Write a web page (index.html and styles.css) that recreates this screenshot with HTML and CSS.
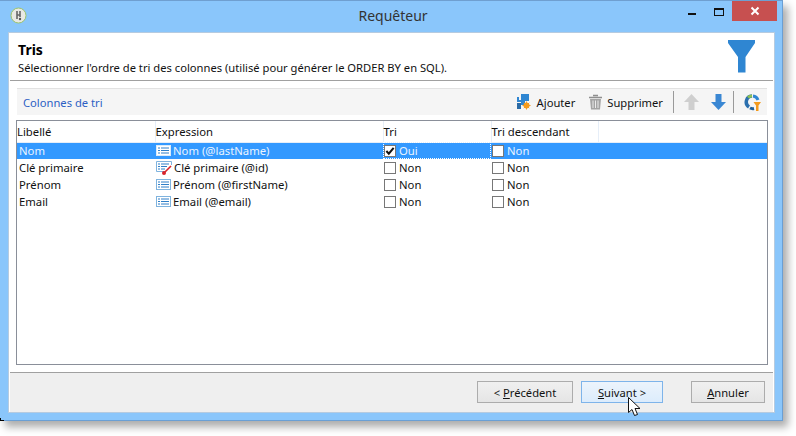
FILE: index.html
```html
<!DOCTYPE html>
<html lang="fr">
<head>
<meta charset="utf-8">
<title>Requêteur</title>
<link rel="stylesheet" href="styles.css">
</head>
<body>
<div class="window">
  <div class="titlebar">
    <svg class="appicon" width="17" height="17" viewBox="0 0 17 17"><circle cx="8.5" cy="8.5" r="7.5" fill="#e9e9e4" stroke="#9cc46a"/><path d="M7 4v8M10 4v6M7 8h3" stroke="#666" stroke-width="1.6" fill="none"/><circle cx="10" cy="12" r="1.2" fill="#555"/></svg>
    <span class="title">Requêteur</span>
    <div class="controls">
      <span class="min"></span>
      <span class="max"></span>
      <span class="close"><svg width="10" height="10" viewBox="0 0 10 10"><path d="M1.5 1.5l7 7M8.5 1.5l-7 7" stroke="#fff" stroke-width="2"/></svg></span>
    </div>
  </div>
  <div class="client">
    <header class="head">
      <div>
        <h1>Tris</h1>
        <p>Sélectionner l'ordre de tri des colonnes (utilisé pour générer le ORDER BY en SQL).</p>
      </div>
      <svg class="funnel" width="27" height="33" viewBox="0 0 27 33"><path d="M0 0H27V3L17.500 17V32.500H10V17L0 3Z" fill="#2f86d2"/></svg>
    </header>
    <div class="body">
      <div class="toolbar">
        <span class="tbtitle">Colonnes de tri</span>
        <span class="tool add">
          <svg width="15" height="16" viewBox="0 0 15 16"><path d="M5 0H13V7H9V11H5V8H1V3L3 3V6H5Z" fill="#2f86d2"/><path d="M1 9H5V15H1Z" fill="#2a6ba6"/><circle cx="10.500" cy="11.500" r="3" fill="#f39a1d"/><path d="M10.500 7.500v8M6.500 11.500h8M7.800 8.800l5.400 5.400M13.200 8.800l-5.400 5.400" stroke="#f39a1d" stroke-width="1"/></svg>
          Ajouter
        </span>
        <span class="tool del">
          <svg width="15" height="16" viewBox="0 0 15 16"><path d="M5 1.500h5M1 3.500h13" stroke="#8f8f8f" stroke-width="1.600"/><path d="M2 5H13L12 15.500H3Z" fill="#a4a4a4"/><path d="M5 6.500v7.500M7.500 6.500v7.500M10 6.500v7.500" stroke="#ececec"/></svg>
          Supprimer
        </span>
        <span class="sep first"></span>
        <svg class="arrow" width="15" height="16" viewBox="0 0 15 16"><path d="M7.500 0L15 8H10.500V16H4.500V8H0Z" fill="#cfcfcf"/></svg>
        <svg class="arrow down" width="15" height="16" viewBox="0 0 15 16"><path d="M7.500 16L15 8H10.500V0H4.500V8H0Z" fill="#3a87d3"/></svg>
        <span class="sep last"></span>
        <svg class="ring" width="17" height="17" viewBox="0 0 17 17"><path d="M8 2A6 6 0 0 0 5 13" fill="none" stroke="#2b6fae" stroke-width="3.500"/><path d="M4 3.500A6 6 0 0 1 8 2" fill="none" stroke="#8cc152" stroke-width="3"/><path d="M9 2A6 6 0 0 1 14 6" fill="none" stroke="#2f86d2" stroke-width="3"/><path d="M6 14A6 6 0 0 0 10 14.500" fill="none" stroke="#1f5f99" stroke-width="3"/><path d="M9.500 8H17L14.500 11.500V17H12V11.500Z" fill="#f39a1d"/></svg>
      </div>
      <div class="tablebox">
        <table>
          <colgroup><col class="c1"><col class="c2"><col class="c3"><col class="c4"><col></colgroup>
          <thead>
            <tr><th>Libellé</th><th>Expression</th><th>Tri</th><th>Tri descendant</th><th class="filler"></th></tr>
          </thead>
          <tbody>
            <tr class="selected">
              <td class="lbl">Nom</td>
              <td><span class="expr"><svg class="fld" width="15" height="11" viewBox="0 0 15 11"><rect x=".5" y=".5" width="14" height="10" fill="#fff" stroke="#d9ebfb"/><path d="M2 3h2M5 3h8M2 5.500h2M5 5.500h8M2 8h2M5 8h8" stroke="#2f7fc8"/></svg>Nom (@lastName)</span></td>
              <td class="focus"><span class="chk"><span class="box on"><svg width="10" height="10" viewBox="0 0 11 11"><path d="M1.500 5.500L4.200 8.500L9.500 2" fill="none" stroke="#111" stroke-width="2.200"/></svg></span>Oui</span></td>
              <td><span class="chk"><span class="box"></span>Non</span></td>
              <td></td>
            </tr>
            <tr>
              <td class="lbl">Clé primaire</td>
              <td><span class="expr"><svg class="fld" width="16" height="14" viewBox="0 0 16 14"><path d="M.5 .5H15.500V4M9 10.500H.5V.5" fill="#fff" stroke="#7fb3de"/><path d="M2 3h2M5 3h8M2 5.500h2M5 5.500h6M2 8h2M5 8h4" stroke="#2f7fc8"/><path d="M15 5L9 11" stroke="#d8232a" stroke-width="1.600"/><circle cx="8" cy="12" r="2" fill="#d8232a"/></svg>Clé primaire (@id)</span></td>
              <td><span class="chk"><span class="box"></span>Non</span></td>
              <td><span class="chk"><span class="box"></span>Non</span></td>
              <td></td>
            </tr>
            <tr>
              <td class="lbl">Prénom</td>
              <td><span class="expr"><svg class="fld" width="15" height="11" viewBox="0 0 15 11"><rect x=".5" y=".5" width="14" height="10" fill="#fff" stroke="#7fb3de"/><path d="M2 3h2M5 3h8M2 5.500h2M5 5.500h8M2 8h2M5 8h8" stroke="#2f7fc8"/></svg>Prénom (@firstName)</span></td>
              <td><span class="chk"><span class="box"></span>Non</span></td>
              <td><span class="chk"><span class="box"></span>Non</span></td>
              <td></td>
            </tr>
            <tr>
              <td class="lbl">Email</td>
              <td><span class="expr"><svg class="fld" width="15" height="11" viewBox="0 0 15 11"><rect x=".5" y=".5" width="14" height="10" fill="#fff" stroke="#7fb3de"/><path d="M2 3h2M5 3h8M2 5.500h2M5 5.500h8M2 8h2M5 8h8" stroke="#2f7fc8"/></svg>Email (@email)</span></td>
              <td><span class="chk"><span class="box"></span>Non</span></td>
              <td><span class="chk"><span class="box"></span>Non</span></td>
              <td></td>
            </tr>
          </tbody>
        </table>
      </div>
    </div>
    <footer class="foot">
      <button class="btn prev">&lt; <u>P</u>récédent</button>
      <button class="btn next"><u>S</u>uivant &gt;</button>
      <button class="btn cancel"><u>A</u>nnuler</button>
    </footer>
  </div>
  <span class="corner"></span>
  <svg class="cursor" width="14" height="20" viewBox="0 0 14 20"><path d="M.5 .5V15.500L4 12.500L6.500 18.500L9.500 17.500L7 11.500H12Z" fill="#fff" stroke="#111"/></svg>
</div>
</body>
</html>
```
FILE: styles.css
```css
* { box-sizing: border-box; }
html, body { margin: 0; padding: 0; background: #fff; }
body {
  width: 796px;
  height: 436px;
  overflow: hidden;
  font-family: "Noto Sans", "Open Sans", sans-serif;
  font-size: 11.2px;
  color: #111;
}
.window {
  position: relative;
  width: 783px;
  height: 421px;
  display: flex;
  flex-direction: column;
  background: #8ac6fb;
  border-top: 1px solid #6f9fd0;
  border-right: 1px solid #6a9fd4;
  border-bottom: 1px solid #6a9fd4;
  padding: 0 7px 7px 8px;
  box-shadow: 5px 6px 8px rgba(0, 0, 0, .33);
}
.titlebar {
  height: 31px;
  flex: none;
  display: flex;
  align-items: flex-start;
  position: relative;
  margin-left: -8px;
  margin-right: -7px;
}
.appicon { margin: 6px 0 0 10px; }
.title {
  position: absolute;
  left: 4px;
  right: 0;
  top: 6px;
  text-align: center;
  font-size: 14px;
  line-height: 18px;
  color: #333;
}
.controls {
  margin-left: auto;
  margin-right: 5px;
  display: flex;
  position: relative;
}
.min { width: 8px; height: 2px; background: #111; margin: 12px 18px 0 0; }
.max { width: 10px; height: 8px; border: 1px solid #111; border-top-width: 2px; margin: 7px 8px 0 0; }
.close {
  width: 45px;
  height: 20px;
  background: #c75050;
  display: flex;
  align-items: center;
  justify-content: center;
}
.client {
  flex: 1;
  display: flex;
  flex-direction: column;
  background: #fff;
  border: 1px solid #b6cbe0;
  min-height: 0;
}
.head {
  height: 48px;
  flex: none;
  margin: 0 1px;
  padding: 7px 18px 0 8px;
  display: flex;
  justify-content: space-between;
  border-bottom: 1px solid #a0a0a0;
}
h1 { margin: 0; font-size: 14px; line-height: 19px; font-weight: 700; color: #000; }
.head p { margin: 1px 0 0; font-size: 11.2px; line-height: 16px; color: #111; }
.body {
  flex: 1;
  min-height: 0;
  padding: 7px 6px 7px 7px;
  display: flex;
  flex-direction: column;
}
.toolbar {
  height: 27px;
  flex: none;
  margin: 0 1px 5px 1px;
  background: #f5f5f5;
  border-top: 1px solid #e2e2e2;
  display: flex;
  align-items: center;
  padding-left: 6px;
}
.tbtitle { color: #2c5fc4; margin-right: auto; }
.tool { display: flex; align-items: center; gap: 6px; color: #111; }
.add { margin-right: 13px; }
.del { gap: 4px; }
.sep { width: 1px; height: 22px; background: #9a9a9a; }
.sep.first { margin: 0 10px 0 10px; }
.arrow.down { margin-left: 12px; }
.sep.last { margin: 0 10px 0 7px; }
.ring { margin-right: 6px; }
.tablebox {
  flex: 1;
  min-height: 0;
  border: 1px solid #8a8f99;
  background: #fff;
  overflow: hidden;
}
table { border-collapse: collapse; table-layout: fixed; width: 100%; font-size: 11.3px; }
.c1 { width: 138px; }
.c2 { width: 228px; }
.c3 { width: 108px; }
.c4 { width: 107px; }
th {
  height: 21px;
  padding: 0;
  text-align: left;
  font-weight: 400;
  color: #111;
  border-right: 1px solid #e6eef8;
  border-bottom: 1px solid #e6eef8;
}
th.filler { border-right: 0; }
td { height: 17px; padding: 0; line-height: 16px; white-space: nowrap; }
td.lbl { padding-left: 2px; }
.expr { display: flex; align-items: center; gap: 2px; padding-left: 1px; }
.fld { flex: none; }
.chk { display: flex; align-items: center; gap: 3px; padding-left: 1px; }
.box {
  width: 12px;
  height: 12px;
  flex: none;
  border: 1px solid #777;
  background: #fff;
  display: flex;
  align-items: center;
  justify-content: center;
}
.selected td { background: #3399ff; color: #eaf4ff; }
.selected td.focus { outline: 1px dotted #fff; outline-offset: -1px; }
.foot {
  height: 40px;
  flex: none;
  margin: 0 1px;
  background: #efefef;
  border-top: 1px solid #a0a0a0;
  display: flex;
  align-items: flex-start;
  padding: 8px 0 0 467px;
}
.btn {
  height: 22px;
  padding: 0;
  font: inherit;
  color: #111;
  background: linear-gradient(#f0f0f0, #e5e5e5);
  border: 1px solid #acacac;
}
.prev { width: 96px; margin-right: 8px; }
.next { width: 82px; margin-right: 28px; background: linear-gradient(#ecf4fc, #dcecfc); border-color: #7eb4ea; }
.cancel { width: 74px; }
.corner {
  position: absolute;
  left: 0;
  bottom: -1px;
  width: 4px;
  height: 3px;
  border-left: 1px solid #000;
  border-bottom: 1px solid #000;
}
.cursor { position: absolute; left: 628px; top: 396px; }
```
